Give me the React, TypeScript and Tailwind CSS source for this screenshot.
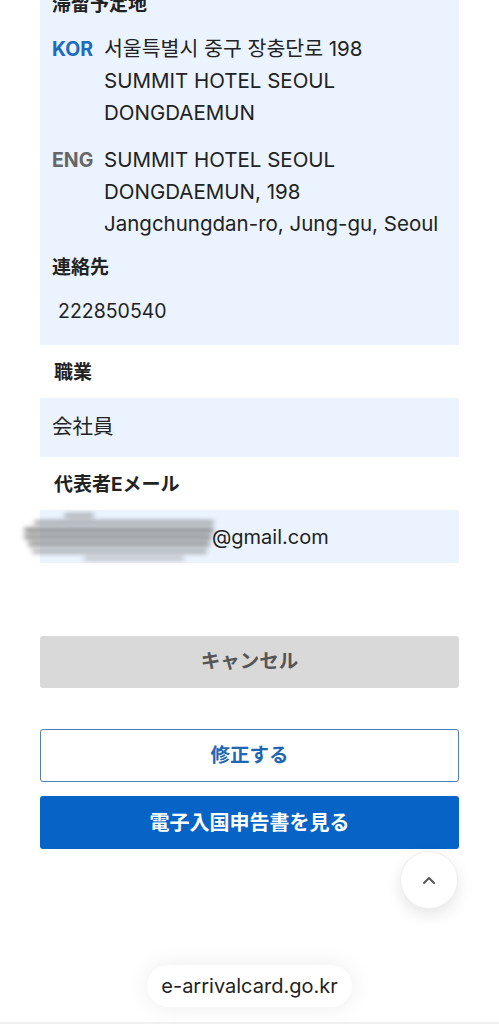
import React from "react";

const FONT = {
  fontFamily:
    'Inter, "Noto Sans CJK JP", "Noto Sans CJK KR", "Noto Sans", sans-serif',
};

export default function App() {
  return (
    <div
      className="relative w-full h-[1024px] overflow-hidden bg-white text-[#222]"
      style={FONT}
    >
      {/* Address / contact block */}
      <div className="mx-[40px] -mt-[11px] bg-[#eaf3fe] px-[12px] pb-[18px]">
        <div className="text-[19px] font-bold leading-[32px]">滞留予定地</div>

        <div className="mt-[12px] flex">
          <div className="w-[52px] shrink-0 text-[19.5px] font-bold leading-[32px] text-[#1c6bbf]">
            KOR
          </div>
          <div className="text-[20.5px] leading-[32px]">
            <div>서울특별시 중구 장충단로 198</div>
            <div>SUMMIT HOTEL SEOUL</div>
            <div>DONGDAEMUN</div>
          </div>
        </div>

        <div className="mt-[15px] flex">
          <div className="w-[52px] shrink-0 text-[19.5px] font-bold leading-[32px] text-[#666]">
            ENG
          </div>
          <div className="text-[20.5px] leading-[32px]">
            <div>SUMMIT HOTEL SEOUL</div>
            <div>DONGDAEMUN, 198</div>
            <div>Jangchungdan-ro, Jung-gu, Seoul</div>
          </div>
        </div>

        <div className="mt-[14px] text-[19px] font-bold leading-[28px]">連絡先</div>
        <div className="mt-[13px] pl-[6px] text-[19.5px] leading-[32px]">222850540</div>
      </div>

      {/* 職業 */}
      <div className="mx-[40px] mt-[14px] px-[14px] text-[19px] font-bold leading-[28px]">
        職業
      </div>
      <div className="mx-[40px] mt-[11px] flex h-[59px] items-center bg-[#eaf3fe] px-[12px] text-[20.5px]">
        会社員
      </div>

      {/* Email */}
      <div className="mx-[40px] mt-[14px] px-[14px] text-[19px] font-bold leading-[28px]">
        代表者Eメール
      </div>
      <div className="relative mx-[40px] mt-[11px] flex h-[53px] items-center bg-[#eaf3fe] pl-[172px] text-[20px]">
        <div className="absolute -left-[16px] top-[2px] h-[50px] w-[192px] blur-[2.5px]">
          <div className="ml-[40px] mt-[2px] h-[3px] w-[30px] rounded bg-[#888]" />
          <div className="ml-[10px] mt-[4px] h-[3px] w-[180px] rounded bg-[#7a7a7a]" />
          <div className="mt-[4px] h-[4px] w-[190px] rounded bg-[#6e6e6e]" />
          <div className="mt-[3px] h-[4px] w-[188px] rounded bg-[#777]" />
          <div className="ml-[4px] mt-[3px] h-[4px] w-[182px] rounded bg-[#7d7d7d]" />
          <div className="ml-[8px] mt-[4px] h-[3px] w-[175px] rounded bg-[#8a8a8a]" />
          <div className="ml-[60px] mt-[4px] h-[3px] w-[100px] rounded bg-[#aaa]" />
        </div>
        <span className="relative">@gmail.com</span>
      </div>

      {/* Buttons */}
      <div className="mx-[40px] mt-[73px] flex h-[52px] items-center justify-center rounded-[3px] bg-[#d9d9d9] text-[19.5px] font-bold text-[#555]">
        キャンセル
      </div>
      <div className="mx-[40px] mt-[41px] flex h-[53px] items-center justify-center rounded-[3px] border border-[#4f7fb5] bg-white text-[19.5px] font-bold text-[#1f66b3]">
        修正する
      </div>
      <div className="mx-[40px] mt-[14px] flex h-[53px] items-center justify-center rounded-[3px] bg-[#0763c6] text-[20px] font-bold text-white">
        電子入国申告書を見る
      </div>

      {/* Scroll to top */}
      <div className="absolute left-[400px] top-[851px] flex h-[58px] w-[58px] items-center justify-center rounded-full border border-[#eee] bg-white shadow-[0_6px_16px_rgba(0,0,0,0.10)]">
        <svg width="16" height="10" viewBox="0 0 16 10" fill="none">
          <path
            d="M3 8 L8 3 L13 8"
            stroke="#555"
            strokeWidth="2"
            strokeLinecap="round"
            strokeLinejoin="round"
          />
        </svg>
      </div>

      {/* URL pill */}
      <div className="absolute left-[147px] top-[965px] flex h-[42px] w-[205px] items-center justify-center rounded-full bg-white text-[20px] text-[#222] shadow-[0_0_24px_rgba(0,0,0,0.08)]">
        e-arrivalcard.go.kr
      </div>
      <div className="absolute bottom-0 left-0 h-[2px] w-full bg-[#f0f0f0]" />
    </div>
  );
}
